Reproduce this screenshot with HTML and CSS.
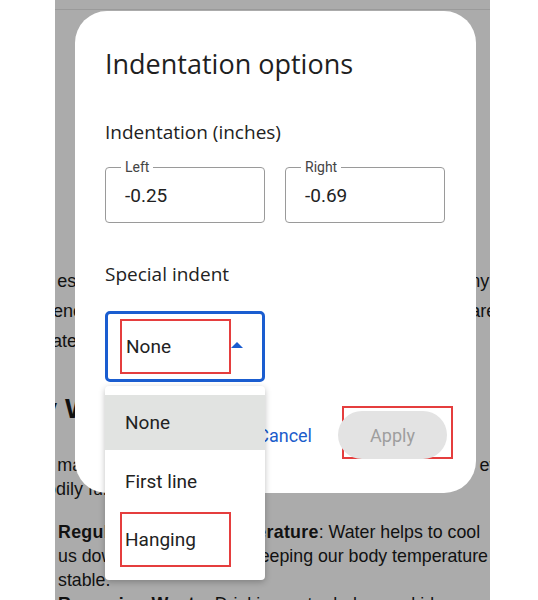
FILE: index.html
```html
<!DOCTYPE html>
<html lang="en">
  <head>
    <meta charset="UTF-8" />
    <meta name="viewport" content="width=device-width, initial-scale=1.0" />
    <title>Indentation options</title>
    <link rel="stylesheet" href="styles.css">
  </head>
  <body>
    <div class="screen">
      <div class="topbar"></div>

      <!-- Document behind the dimmed scrim -->
      <div class="page">
        <p class="intro">
          Water is essential to life. It supports the body in so many, many ways<br>
          Without enough water, our organs cannot work the way they are supposed to<br>
          Clean water is the best choice for staying healthy.
        </p>
        <h2 class="heading">Why We Need Water</h2>
        <p class="lead">
          Water is made of simple molecules, yet it is needed by nearly everybody<br>
          Many bodily functions.
        </p>
        <ul class="reasons">
          <li><b>Regulating Body Temperature</b>: Water helps to cool us down through sweat, keeping our body temperature stable.</li>
          <li><b>Removing Waste</b>: Drinking water helps our kidneys flush out waste.</li>
        </ul>
      </div>

      <!-- Dialog -->
      <div class="dialog">
        <h1 class="dialog-title">Indentation options</h1>

        <div class="section-label">Indentation (inches)</div>
        <div class="fields">
          <fieldset class="field">
            <legend>Left</legend>
            <span class="field-value">-0.25</span>
          </fieldset>
          <fieldset class="field">
            <legend>Right</legend>
            <span class="field-value">-0.69</span>
          </fieldset>
        </div>

        <div class="section-label special">Special indent</div>
        <div class="select">
          <span class="mark">None</span>
          <span class="caret"></span>
        </div>

        <div class="actions">
          <button class="btn-text">Cancel</button>
          <span class="mark mark-apply">
            <button class="btn-apply" disabled>Apply</button>
          </span>
        </div>
      </div>

      <!-- Open dropdown -->
      <ul class="menu">
        <li class="menu-item selected">None</li>
        <li class="menu-item">First line</li>
        <li class="menu-item"><span class="mark">Hanging</span></li>
      </ul>
    </div>
  </body>
</html>
```

FILE: styles.css
```css
/* Base */
body {
  margin: 0;
  background: #fff;
  font-family: Roboto, "Liberation Sans", sans-serif;
}

.screen {
  position: relative;
  margin-left: 55px;
  width: 435px;
  height: 600px;
  background: #ababab;
  overflow: hidden;
}

.topbar {
  height: 9px;
  border-bottom: 1px solid #9a9a9a;
}

/* Document text under the scrim */
.page {
  margin-left: -68px;
  font-family: "Liberation Sans", Arial, sans-serif;
  font-size: 18px;
  color: #111;
}

.intro {
  margin: 256px 0 0;
  line-height: 30px;
  white-space: nowrap;
}

.heading {
  margin: 36px 0 0 11px;
  font-size: 28px;
  line-height: 34px;
  white-space: nowrap;
}

.lead {
  margin: 27px 0 0;
  line-height: 24px;
  white-space: nowrap;
}

.reasons {
  margin: 19px 0 0 71px;
  padding: 0;
  list-style: none;
  width: 445px;
  font-size: 17.8px;
  line-height: 24px;
}

.reasons b {
  letter-spacing: 0.3px;
}

/* Dialog */
.dialog {
  position: absolute;
  left: 20px;
  top: 11px;
  width: 401px;
  box-sizing: border-box;
  padding: 35px 30px 34px;
  background: #fff;
  border-radius: 32px;
}

.dialog-title {
  margin: 0;
  font-family: "Open Sans", Roboto, sans-serif;
  font-size: 27px;
  font-weight: 400;
  line-height: 36px;
  color: #1f1f1f;
}

.section-label {
  margin-top: 37px;
  font-family: "Open Sans", Roboto, sans-serif;
  font-size: 19px;
  line-height: 26px;
  color: #222;
}

.section-label.special {
  margin-top: 38px;
}

.fields {
  display: flex;
  gap: 20px;
  margin-top: 14px;
}

.field {
  width: 160px;
  height: 64px;
  box-sizing: border-box;
  margin: 0;
  padding: 0 0 0 19px;
  border: 1px solid #9a9a9a;
  border-radius: 4px;
}

.field legend {
  padding: 0 4px;
  margin-left: -4px;
  font-size: 14px;
  line-height: 16px;
  color: #444;
}

.field-value {
  display: block;
  margin-top: 9px;
  font-size: 19px;
  color: #222;
}

/* Select */
.select {
  display: flex;
  align-items: center;
  width: 160px;
  height: 71px;
  box-sizing: border-box;
  margin-top: 24px;
  padding-left: 12px;
  border: 3px solid #1a5dd0;
  border-radius: 5px;
}

.mark {
  display: flex;
  align-items: center;
  box-sizing: border-box;
  width: 111px;
  height: 55px;
  padding-left: 4px;
  border: 2px solid #e53e3e;
  font-size: 19px;
  color: #222;
}

.caret {
  width: 0;
  height: 0;
  margin-top: -4px;
  border-left: 6px solid transparent;
  border-right: 6px solid transparent;
  border-bottom: 6px solid #1a5dd0;
}

/* Actions */
.actions {
  display: flex;
  justify-content: flex-end;
  align-items: center;
  gap: 30px;
  margin-top: 29px;
  height: 48px;
}

.btn-text {
  border: none;
  background: none;
  padding: 0;
  font-family: inherit;
  font-size: 18px;
  color: #1b5ccb;
}

.mark-apply {
  width: 111px;
  height: 53px;
  padding: 3px 0 0;
  margin-top: -5px;
  margin-right: -7px;
  align-items: flex-start;
}

.btn-apply {
  width: 109px;
  height: 48px;
  margin-left: -6px;
  border: none;
  border-radius: 24px;
  background: #e3e3e3;
  font-family: inherit;
  font-size: 18px;
  color: #9e9e9e;
}

/* Dropdown menu */
.menu {
  position: absolute;
  left: 50px;
  top: 386px;
  width: 160px;
  margin: 0;
  padding: 9px 0 12px;
  list-style: none;
  background: #fff;
  border-radius: 4px;
  box-shadow: 0 2px 6px rgba(0, 0, 0, 0.25);
}

.menu-item {
  display: flex;
  align-items: center;
  height: 58px;
  padding-left: 20px;
  font-size: 19px;
  color: #222;
}

.menu-item.selected {
  background: #e1e3e1;
  height: 55px;
  margin-bottom: 2px;
}

.menu-item .mark {
  margin-left: -5px;
  padding-left: 3px;
}
```
